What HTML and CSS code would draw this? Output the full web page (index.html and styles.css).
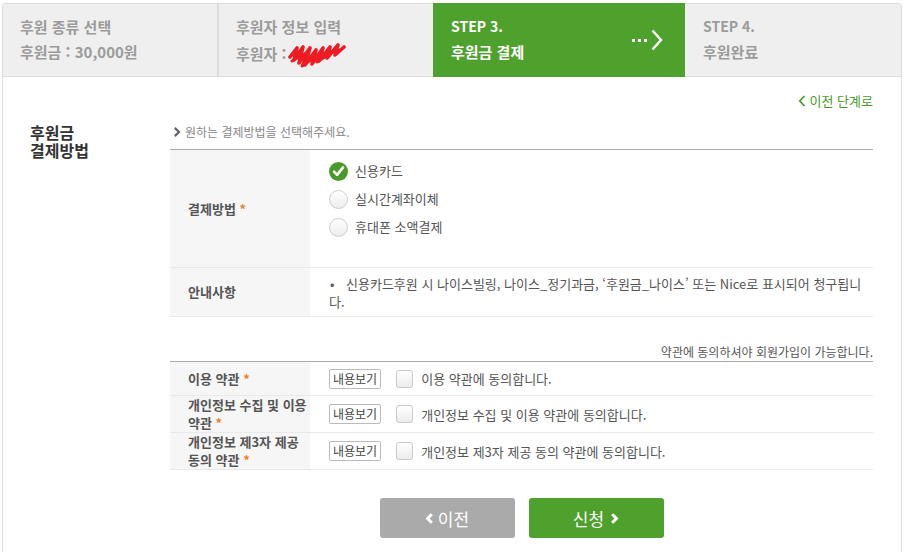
FILE: index.html
```html
<!DOCTYPE html>
<html lang="ko">
<head>
<meta charset="utf-8">
<title>후원금 결제</title>
<link rel="stylesheet" href="styles.css">
</head>
<body>
<div class="wrap">
  <ol class="steps">
    <li class="step">
      <div class="step-text"><span>후원 종류 선택</span><span>후원금 : 30,000원</span></div>
    </li>
    <li class="step">
      <div class="step-text"><span>후원자 정보 입력</span><span class="donor">후원자 : <svg class="scribble" width="58" height="26" viewBox="0 0 58 26"><path d="M2 15 L9 6 L6 18 L15 5 L11 21 L22 6 L17 23 L28 8 L24 22 L35 6 L31 19 L42 5 L39 16 L50 3 L47 13 L56 5" fill="none" stroke="#ec1c24" stroke-width="3.6" stroke-linejoin="round" stroke-linecap="round"/><path d="M4 19 L20 10 L14 24 L33 11 L29 20 L46 9 L52 8" fill="none" stroke="#ec1c24" stroke-width="3" stroke-linecap="round" stroke-linejoin="round"/></svg></span></div>
    </li>
    <li class="step step-active">
      <div class="step-text"><span class="latin">STEP 3.</span><span>후원금 결제</span></div>
      <svg class="step-arrow" width="31" height="22" viewBox="0 0 31 22">
        <rect x="0" y="10" width="3" height="3" fill="#fff"/>
        <rect x="6" y="10" width="3" height="3" fill="#fff"/>
        <rect x="12" y="10" width="3" height="3" fill="#fff"/>
        <path d="M20.5 1.5 L29 11 L20.5 20.5" fill="none" stroke="#fff" stroke-width="2.4"/>
      </svg>
    </li>
    <li class="step">
      <div class="step-text"><span class="latin">STEP 4.</span><span>후원완료</span></div>
    </li>
  </ol>

  <div class="page">
    <div class="back-row">
      <a class="back-link" href="#"><svg width="8" height="12" viewBox="0 0 8 12"><path d="M6.5 1 L1.8 6 L6.5 11" fill="none" stroke="#4a9b2a" stroke-width="1.8"/></svg>이전 단계로</a>
    </div>

    <div class="main">
      <h2 class="section-title">후원금<br>결제방법</h2>

      <div class="content">
        <p class="guide"><svg class="guide-icon" width="8" height="10" viewBox="0 0 8 10"><path d="M1.8 0.9 L6 5 L1.8 9.1" fill="none" stroke="#666" stroke-width="2.2"/></svg>원하는 결제방법을 선택해주세요.</p>

        <table class="form-table">
          <tr class="row-pay">
            <th>결제방법 <em class="req">*</em></th>
            <td>
              <ul class="radio-list">
                <li class="radio-item"><span class="radio radio-checked"><svg width="19" height="19" viewBox="0 0 19 19"><path d="M5 9.7 L8.1 12.9 L14 5.4" fill="none" stroke="#fff" stroke-width="2.6" stroke-linecap="round" stroke-linejoin="round"/></svg></span>신용카드</li>
                <li class="radio-item"><span class="radio"></span>실시간계좌이체</li>
                <li class="radio-item"><span class="radio"></span>휴대폰 소액결제</li>
              </ul>
            </td>
          </tr>
          <tr class="row-info">
            <th>안내사항</th>
            <td class="notice-cell"><p class="notice"><span class="bullet">•</span>신용카드후원 시 나이스빌링, 나이스_정기과금, ‘후원금_나이스’ 또는 Nice로 표시되어 청구됩니다.</p></td>
          </tr>
        </table>

        <p class="terms-note">약관에 동의하셔야 회원가입이 가능합니다.</p>

        <table class="form-table terms-table">
          <tr class="row-short">
            <th>이용 약관 <em class="req">*</em></th>
            <td><div class="agree"><button class="view-btn" type="button">내용보기</button><span class="checkbox"></span><span class="agree-text">이용 약관에 동의합니다.</span></div></td>
          </tr>
          <tr class="row-tall">
            <th>개인정보 수집 및 이용 약관 <em class="req">*</em></th>
            <td><div class="agree"><button class="view-btn" type="button">내용보기</button><span class="checkbox"></span><span class="agree-text">개인정보 수집 및 이용 약관에 동의합니다.</span></div></td>
          </tr>
          <tr class="row-tall">
            <th>개인정보 제3자 제공 동의 약관 <em class="req">*</em></th>
            <td><div class="agree"><button class="view-btn" type="button">내용보기</button><span class="checkbox"></span><span class="agree-text">개인정보 제3자 제공 동의 약관에 동의합니다.</span></div></td>
          </tr>
        </table>

        <div class="actions">
          <button class="btn btn-prev" type="button"><svg width="9" height="11" viewBox="0 0 9 11"><path d="M6.8 1.3 L2.6 5.5 L6.8 9.7" fill="none" stroke="#fff" stroke-width="3"/></svg>이전</button>
          <button class="btn btn-submit" type="button">신청<svg width="9" height="11" viewBox="0 0 9 11"><path d="M2.2 1.3 L6.4 5.5 L2.2 9.7" fill="none" stroke="#fff" stroke-width="3"/></svg></button>
        </div>
      </div>
    </div>
  </div>
</div>
</body>
</html>
```

FILE: styles.css
```css
* { box-sizing: border-box; }

html, body {
  margin: 0;
  padding: 0;
  background: #fff;
}

body {
  font-family: "Noto Sans CJK KR", "Noto Sans", sans-serif;
  color: #555;
}

.wrap {
  margin: 3px 0 0 2px;
  width: 900px;
  min-height: 560px;
  border: 1px solid #ddd;
  border-bottom: 0;
  border-radius: 4px 4px 0 0;
}

/* ---------- steps ---------- */
.steps {
  display: flex;
  margin: 0;
  padding: 0;
  list-style: none;
  height: 73px;
  background: #efefef;
  border-bottom: 1px solid #ddd;
  border-radius: 3px 3px 0 0;
}

.step {
  display: flex;
  justify-content: space-between;
  align-items: center;
  padding-left: 18px;
  color: #9b9b9b;
  font-size: 15px;
  font-weight: bold;
}

.step .latin { font-size: 14px; }

.step:nth-child(1) { width: 216px; border-right: 2px solid #dcdcdc; padding-left: 17px; }
.step:nth-child(2) { width: 214px; padding-left: 17px; }
.step:nth-child(3) { width: 252px; }
.step:nth-child(4) { flex: 1; }

.step-text {
  display: flex;
  flex-direction: column;
  align-self: flex-start;
  padding-top: 10px;
  line-height: 25px;
}

.step-active {
  background: #4fa12e;
  color: #fff;
  margin: -1px 0 -1px;
}

.step-active .step-text { padding-top: 11px; }

.step-arrow { margin-right: 22px; }

.donor {
  display: inline-flex;
  align-items: center;
}

.scribble { margin: 3px 0 0 1px; }

/* ---------- page ---------- */
.page {
  padding: 14px 28px 0 27px;
}

.back-row {
  text-align: right;
  line-height: 18px;
}

.back-link {
  display: inline-flex;
  align-items: center;
  gap: 4px;
  color: #4a9b2a;
  text-decoration: none;
  font-size: 13px;
}

.main {
  display: flex;
  margin-top: 13px;
}

.section-title {
  flex: none;
  width: 140px;
  margin: 0;
  font-size: 16px;
  line-height: 18px;
  font-weight: bold;
  color: #333;
}

.content {
  flex: 1;
  min-width: 0;
}

.guide {
  display: flex;
  align-items: center;
  margin: 0 0 8px 3px;
  font-size: 12px;
  line-height: 18px;
  color: #888;
}

.guide-icon { margin-right: 4px; }

/* ---------- tables ---------- */
.form-table {
  width: 100%;
  border-collapse: collapse;
  border-top: 1px solid #aaa;
}

.form-table th {
  width: 140px;
  padding: 0 2px 0 18px;
  background: #f6f6f6;
  text-align: left;
  vertical-align: middle;
  font-size: 13px;
  line-height: 18px;
  font-weight: bold;
  color: #555;
}

.form-table td {
  padding: 0 10px 0 19px;
  vertical-align: middle;
  font-size: 13px;
  color: #555;
}

.form-table tr { border-bottom: 1px solid #e9e9e9; }

.req {
  font-style: normal;
  color: #f07f22;
}

.radio-list {
  list-style: none;
  margin: 0;
  padding: 7px 0 26px;
}

.radio-item {
  display: flex;
  align-items: center;
  height: 28px;
  line-height: 18px;
}

.radio {
  display: inline-block;
  width: 19px;
  height: 19px;
  margin-right: 7px;
  border: 1px solid #cfcfcf;
  border-radius: 50%;
  background: linear-gradient(#fff, #ececec);
}

.radio-checked {
  border: 0;
  background: #4a9a2b;
}

.radio-checked svg { display: block; }

.form-table .notice-cell { padding-right: 6px; }

.notice {
  margin: 0;
  padding: 7px 0 5px;
  line-height: 18px;
}

.bullet {
  display: inline-block;
  width: 17px;
  padding-left: 1px;
}

.terms-note {
  margin: 26px 0 0;
  text-align: right;
  font-size: 12px;
  line-height: 18px;
  color: #555;
}

.terms-table .row-short { height: 34px; }
.terms-table .row-tall { height: 37px; }

.agree {
  display: flex;
  align-items: center;
}

.view-btn {
  height: 20px;
  padding: 0 3px;
  border: 1px solid #bbb;
  border-radius: 2px;
  background: #fff;
  font-family: inherit;
  font-size: 12px;
  line-height: 18px;
  color: #444;
}

.checkbox {
  display: inline-block;
  width: 17px;
  height: 18px;
  margin: 0 8px 0 15px;
  border: 1px solid #cacaca;
  border-radius: 3px;
  background: linear-gradient(#fff, #ececec);
}

/* ---------- buttons ---------- */
.actions {
  display: flex;
  justify-content: center;
  gap: 14px;
  margin-top: 28px;
}

.btn {
  display: inline-flex;
  align-items: center;
  justify-content: center;
  gap: 4px;
  width: 135px;
  height: 40px;
  border: 0;
  border-radius: 3px;
  color: #fff;
  font-family: inherit;
  font-size: 17px;
}

.btn-prev { background: #aaa; }
.btn-submit { background: #4fa12e; gap: 6px; }
```
